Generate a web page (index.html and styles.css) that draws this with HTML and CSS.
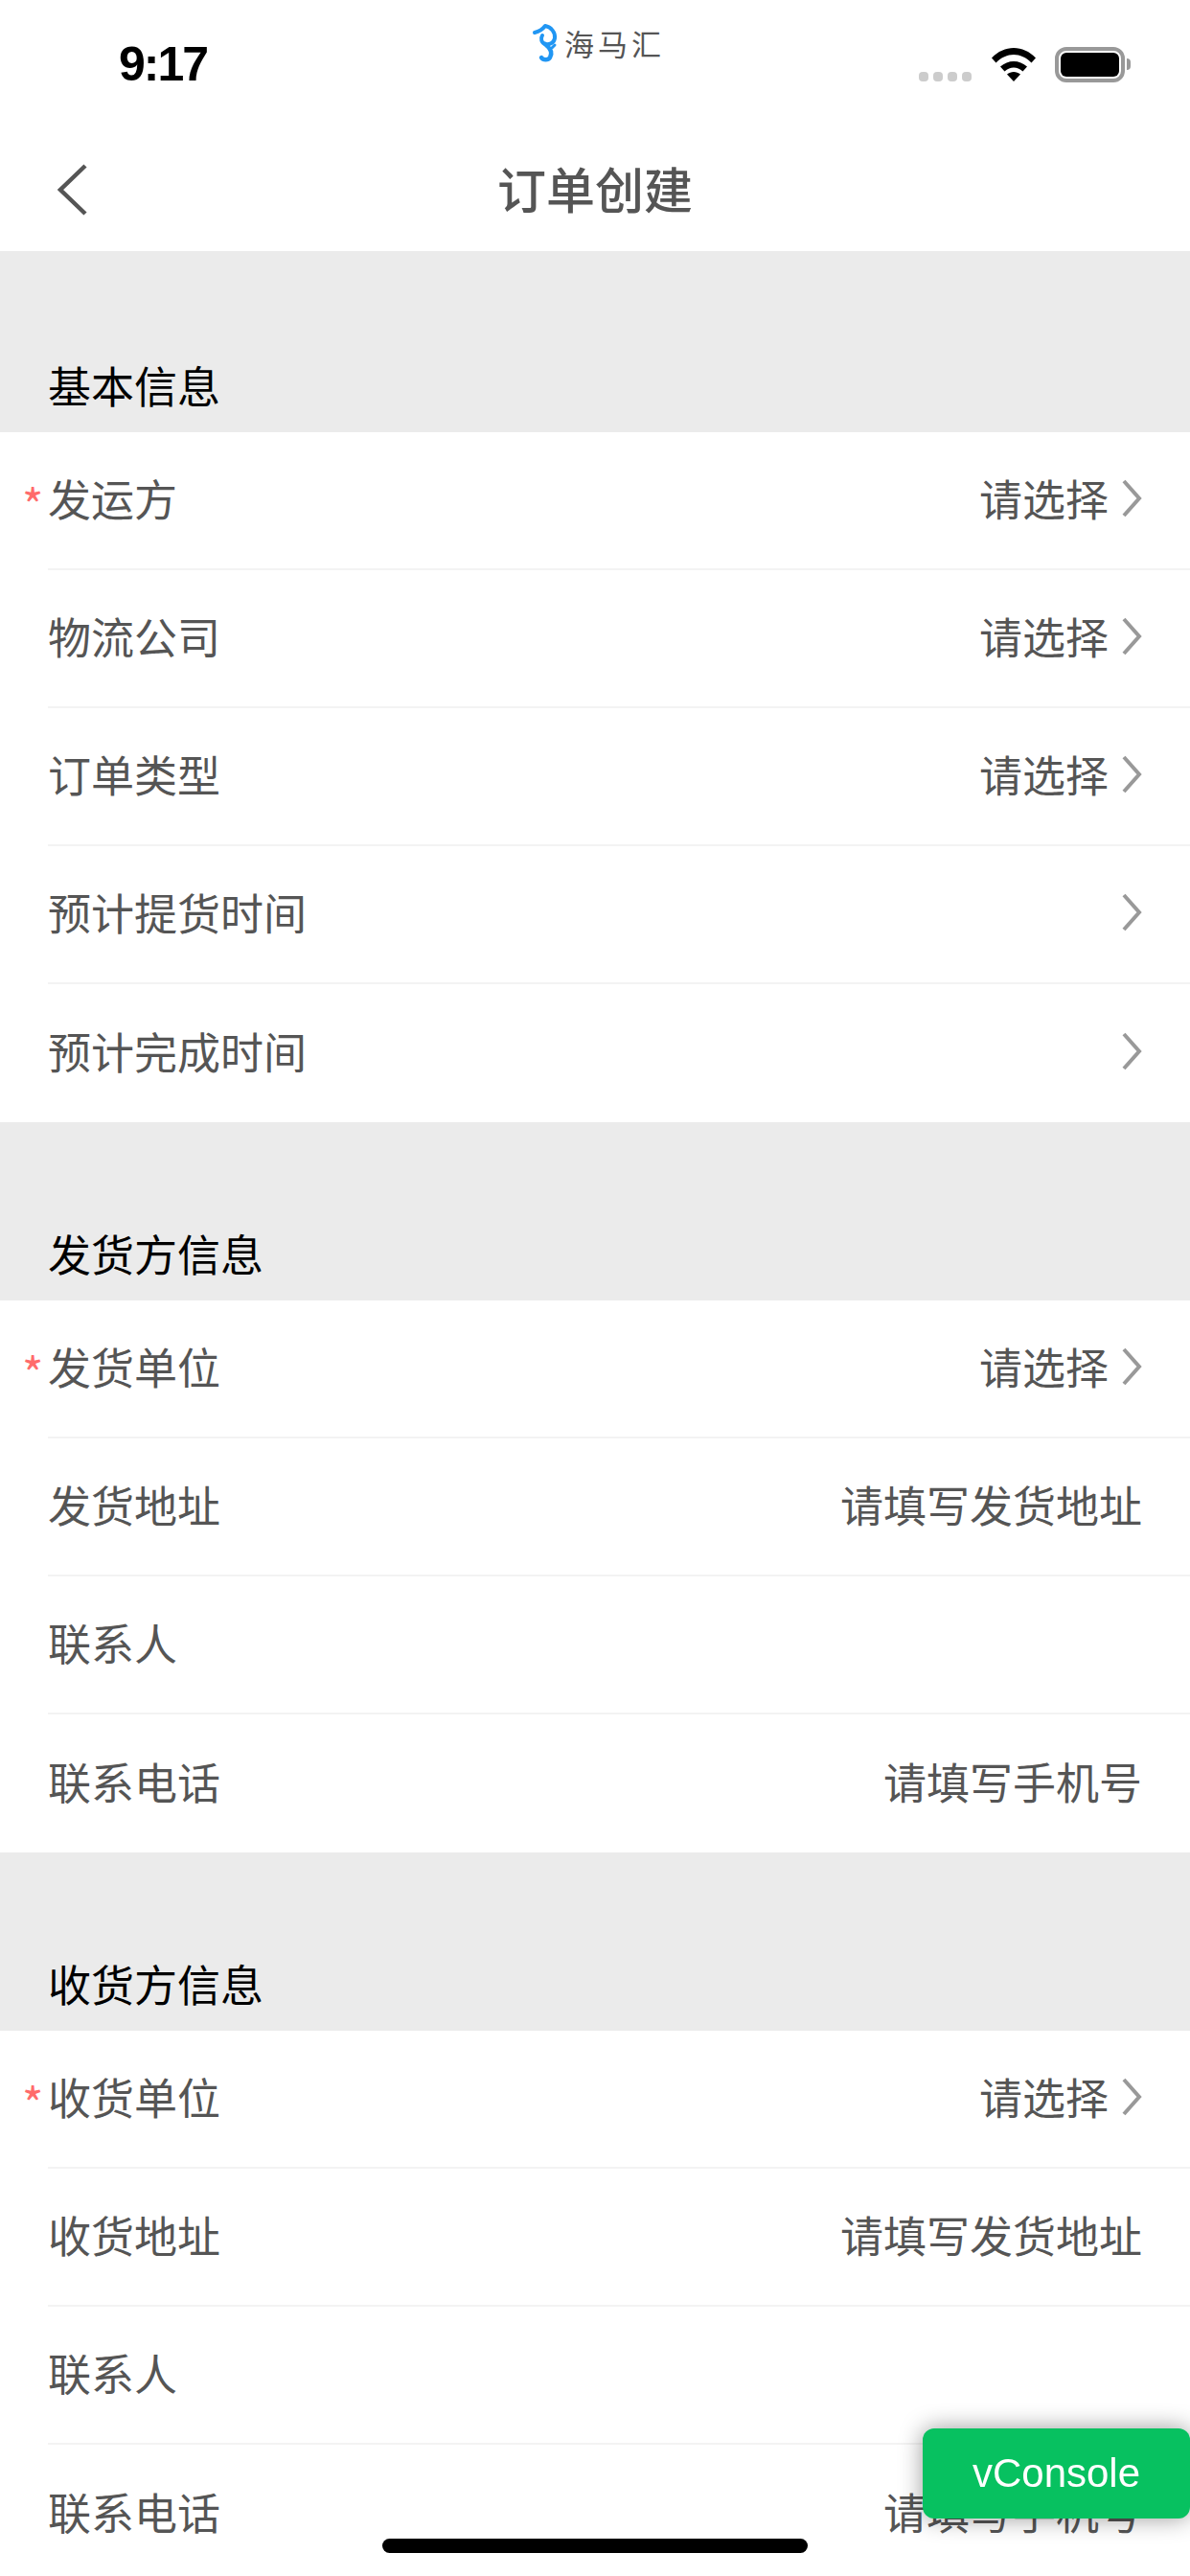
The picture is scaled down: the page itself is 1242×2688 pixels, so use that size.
FILE: index.html
```html
<!DOCTYPE html>
<html lang="zh-CN">
<head>
    <meta charset="UTF-8">
    <meta name="viewport" content="width=device-width, initial-scale=1.0">
    <title>订单创建</title>
    <link rel="stylesheet" href="styles.css">
</head>
<body>
    <!-- Statusleiste -->
    <div class="status-bar">
        <span class="time">9:17</span>
        <div class="status-icons">
            <div class="signal"><i></i><i></i><i></i><i></i></div>
            <svg class="wifi" viewBox="0 0 48 36" width="48" height="36">
                <path d="M1 11.500C14 -2.500 34 -2.500 47 11.500L42.500 16.500C31.500 5 16.500 5 5.500 16.500Z"/>
                <path d="M10 20.500C18 13 30 13 38 20.500L33.500 25.500C27.500 20 20.500 20 14.500 25.500Z"/>
                <path d="M17 28.500C21 25 27 25 31 28.500L24 36Z"/>
            </svg>
            <div class="battery"><div class="battery-level"></div></div>
            <div class="battery-cap"></div>
        </div>
    </div>

    <!-- Logo -->
    <div class="brand">
        <svg class="brand-icon" viewBox="0 0 28 42" width="28" height="42">
            <path d="M3 10C7 9 11 7 14 3C20 4 25 10 24 16C23 21 18 23 14 22C10 21 9 16 11 13" fill="none" stroke="#2196f3" stroke-width="4" stroke-linecap="round" stroke-linejoin="round"/>
            <path d="M14 22C19 26 22 31 19 36C17 39 12 39 10 36" fill="none" stroke="#2196f3" stroke-width="4.500" stroke-linecap="round"/>
            <path d="M21 26L24 23" fill="none" stroke="#2196f3" stroke-width="3" stroke-linecap="round"/>
        </svg>
        <span class="brand-name">海马汇</span>
    </div>

    <!-- Titelleiste -->
    <div class="nav-bar">
        <svg class="back" viewBox="0 0 34 54" width="34" height="54">
            <path d="M31 2L5 27L31 52" fill="none" stroke="#555" stroke-width="4.500"/>
        </svg>
        <h1>订单创建</h1>
    </div>

    <div class="section-title first">基本信息</div>
    <div class="list">
        <div class="row required"><span class="label">发运方</span><span class="value">请选择</span><svg class="arrow" viewBox="0 0 22 40" width="22" height="40"><path d="M3 2L19 20L3 38"/></svg></div>
        <div class="row"><span class="label">物流公司</span><span class="value">请选择</span><svg class="arrow" viewBox="0 0 22 40" width="22" height="40"><path d="M3 2L19 20L3 38"/></svg></div>
        <div class="row"><span class="label">订单类型</span><span class="value">请选择</span><svg class="arrow" viewBox="0 0 22 40" width="22" height="40"><path d="M3 2L19 20L3 38"/></svg></div>
        <div class="row"><span class="label">预计提货时间</span><span class="value"></span><svg class="arrow" viewBox="0 0 22 40" width="22" height="40"><path d="M3 2L19 20L3 38"/></svg></div>
        <div class="row"><span class="label">预计完成时间</span><span class="value"></span><svg class="arrow" viewBox="0 0 22 40" width="22" height="40"><path d="M3 2L19 20L3 38"/></svg></div>
    </div>

    <div class="section-title">发货方信息</div>
    <div class="list">
        <div class="row required"><span class="label">发货单位</span><span class="value">请选择</span><svg class="arrow" viewBox="0 0 22 40" width="22" height="40"><path d="M3 2L19 20L3 38"/></svg></div>
        <div class="row"><span class="label">发货地址</span><span class="value">请填写发货地址</span></div>
        <div class="row"><span class="label">联系人</span><span class="value"></span></div>
        <div class="row"><span class="label">联系电话</span><span class="value">请填写手机号</span></div>
    </div>

    <div class="section-title">收货方信息</div>
    <div class="list">
        <div class="row required"><span class="label">收货单位</span><span class="value">请选择</span><svg class="arrow" viewBox="0 0 22 40" width="22" height="40"><path d="M3 2L19 20L3 38"/></svg></div>
        <div class="row"><span class="label">收货地址</span><span class="value">请填写发货地址</span></div>
        <div class="row"><span class="label">联系人</span><span class="value"></span></div>
        <div class="row"><span class="label">联系电话</span><span class="value">请填写手机号</span></div>
    </div>

    <div class="vconsole">vConsole</div>
    <div class="home-indicator"></div>
</body>
</html>
```

FILE: styles.css
```css
html, body {
    height: 2688px;
}

body {
    margin: 0;
    overflow: hidden;
    background-color: #fff;
    font-family: "Noto Sans CJK SC", "Noto Sans", sans-serif;
    color: #555;
}

/* Statusleiste */
.status-bar {
    height: 132px;
    box-sizing: border-box;
    padding: 39px 62px 0 124px;
    display: flex;
    justify-content: space-between;
    align-items: flex-start;
}

.time {
    font-family: "Liberation Sans", sans-serif;
    font-size: 50px;
    line-height: 56px;
    font-weight: bold;
    letter-spacing: -2px;
    color: #000;
}

.status-icons {
    display: flex;
    align-items: center;
    height: 36px;
    margin-top: 10px;
}

.signal {
    display: flex;
    gap: 5px;
    margin-top: 26px;
    margin-right: 20px;
}

.signal i {
    display: block;
    width: 10px;
    height: 10px;
    border-radius: 4px;
    background-color: #ccc;
}

.wifi {
    margin-right: 19px;
}

.battery {
    width: 73px;
    height: 37px;
    box-sizing: border-box;
    padding: 2px;
    border: 4px solid #999;
    border-radius: 12px;
}

.battery-level {
    height: 100%;
    border-radius: 6px;
    background-color: #000;
}

.battery-cap {
    width: 4px;
    height: 12px;
    margin-left: 2px;
    border-radius: 0 4px 4px 0;
    background-color: #999;
}

.brand {
    position: absolute;
    top: 24px;
    left: 555px;
    display: flex;
    align-items: center;
    gap: 6px;
}

.brand-name {
    font-size: 31px;
    line-height: 42px;
    letter-spacing: 4px;
    color: #555;
}

/* Titelleiste */
.nav-bar {
    height: 130px;
    box-sizing: border-box;
    padding-bottom: 3px;
    position: relative;
    display: flex;
    align-items: center;
    justify-content: center;
}

.nav-bar h1 {
    margin: 0;
    font-size: 51px;
    font-weight: 500;
    color: #555;
}

.back {
    position: absolute;
    left: 58px;
    top: 39px;
}

/* Liste */
.section-title {
    height: 186px;
    box-sizing: border-box;
    padding: 103px 0 0 50px;
    background-color: #ebebeb;
    font-size: 45px;
    line-height: 68px;
    color: #000;
}

.section-title.first {
    height: 189px;
    padding-top: 106px;
}

.list {
    background-color: #fff;
}

.row {
    height: 144px;
    box-sizing: border-box;
    margin-left: 50px;
    padding-right: 50px;
    padding-bottom: 6px;
    display: flex;
    align-items: center;
    gap: 13px;
    border-bottom: 2px solid #f3f3f3;
    font-size: 45px;
    color: #555;
}

.list .row:last-child {
    border-bottom: none;
}

.label {
    flex: 1;
    position: relative;
}

.required .label::before {
    content: "*";
    position: absolute;
    left: -27px;
    top: 3px;
    font-size: 48px;
    color: #ff6b6b;
}

.value {
    text-align: right;
}

.arrow {
    flex-shrink: 0;
    margin-top: 2px;
}

.arrow path {
    fill: none;
    stroke: #999;
    stroke-width: 4px;
}

/* Overlays */
.vconsole {
    position: fixed;
    top: 2534px;
    right: 0;
    width: 279px;
    height: 94px;
    border-radius: 12px;
    background-color: #07c160;
    box-shadow: 0 0 24px rgba(0, 0, 0, 0.4);
    color: #fff;
    font-family: "Liberation Sans", sans-serif;
    font-size: 42px;
    line-height: 94px;
    text-align: center;
}

.home-indicator {
    position: fixed;
    top: 2649px;
    left: 399px;
    width: 444px;
    height: 15px;
    border-radius: 8px;
    background-color: #000;
}
```
